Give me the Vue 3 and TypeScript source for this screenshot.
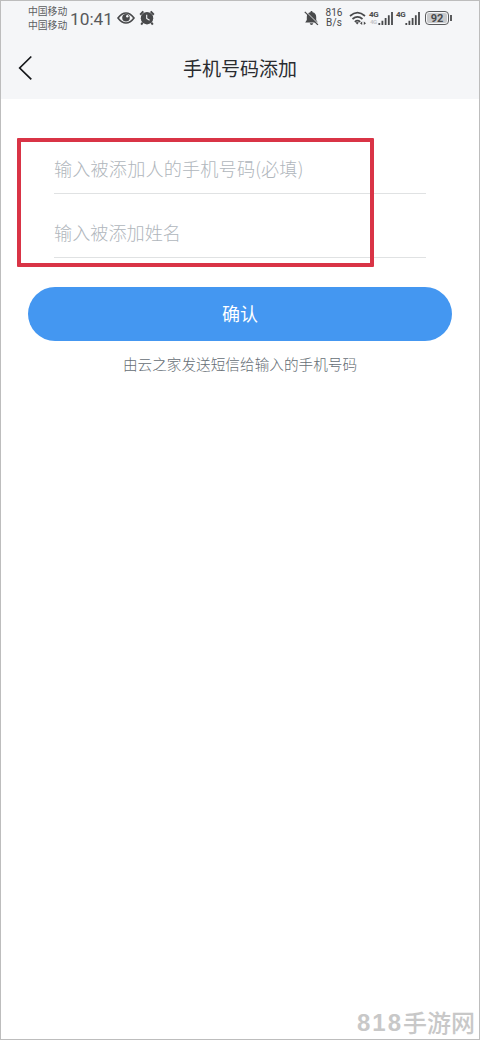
<script setup lang="ts">
import { ref } from 'vue'

interface Field {
  id: string
  hint: string
}

const fields: Field[] = [
  { id: 'phone', hint: '输入被添加人的手机号码(必填)' },
  { id: 'name', hint: '输入被添加姓名' },
]
const values = ref<Record<string, string>>({ phone: '', name: '' })
const carriers: string[] = ['中国移动', '中国移动']
</script>

<template>
  <main class="screen">
    <header class="top">
      <div class="status">
        <div class="carriers">
          <span v-for="(c, i) in carriers" :key="i">{{ c }}</span>
        </div>
        <span class="time">10:41</span>
        <svg class="eye" width="18" height="12" viewBox="0 0 18 12">
          <path d="M1 6Q4.7 1 9 1T17 6Q13.3 11 9 11T1 6Z" fill="none" stroke="#48494b" stroke-width="1.6" />
          <circle cx="9" cy="5.8" r="3.8" fill="#48494b" />
          <circle cx="10.3" cy="4.2" r="1.2" fill="#f5f6f8" />
        </svg>
        <svg class="alarm" width="16" height="16" viewBox="0 0 16 16">
          <path d="M1.2 4.7L4.3 1.4M14.8 4.7L11.7 1.4M3.7 12.5L2.2 14.6M12.3 12.5L13.8 14.6" fill="none" stroke="#48494b" stroke-width="2" />
          <circle cx="8" cy="8.2" r="6.2" fill="#48494b" />
          <path d="M7.7 4.8V8.5L10.6 10.2" fill="none" stroke="#f5f6f8" stroke-width="1.1" />
        </svg>
        <div class="right">
          <svg class="bell" width="15" height="16" viewBox="0 0 15 16">
            <path d="M7.5 1C8.3 1 8.6 1.6 8.6 2.3C11 2.8 12.2 4.7 12.2 7V10L13.8 12.6H1.2L2.8 10V7C2.8 4.7 4 2.8 6.4 2.3C6.4 1.6 6.7 1 7.5 1ZM5.7 13.2H9.3Q9 15 7.5 15T5.7 13.2Z" fill="#48494b" />
            <path d="M1.5 1.2L14.5 14" stroke="#f5f6f8" stroke-width="1" />
            <path d="M.8 1.9L13.9 14.9" stroke="#48494b" stroke-width="1.3" />
          </svg>
          <div class="speed"><span>816</span><span>B/s</span></div>
          <svg class="wifi" width="18" height="15" viewBox="0 0 18 15">
            <g fill="none" stroke="#48494b" stroke-width="1.7">
              <path d="M1 5Q8.5-1.7 16 5" />
              <path d="M3.5 8Q8.5 3.7 13.5 8" />
              <path d="M5.8 10.8Q8.5 8.6 11.2 10.8" />
            </g>
            <path d="M6.5 11.6Q8.2 10.5 9.9 11.6L8.2 13.6Z" fill="#48494b" />
            <path d="M11 12.3L13.2 10.5V14.1ZM17 12.3L14.8 10.5V14.1Z" fill="#48494b" />
          </svg>
          <div class="net"><span>4G</span><span class="faint">4G</span></div>
          <svg class="bars" width="16" height="15" viewBox="0 0 16 15">
            <path d="M.4 12H2.2V14H.4ZM3.5 9.7H5.3V14H3.5ZM6.7 7H8.5V14H6.7ZM9.9 4.3H11.7V14H9.9ZM13.1 1H14.9V14H13.1Z" fill="#48494b" />
          </svg>
          <div class="net second"><span>4G</span></div>
          <svg class="bars" width="16" height="15" viewBox="0 0 16 15">
            <path d="M.4 12H2.2V14H.4ZM3.5 9.7H5.3V14H3.5ZM6.7 7H8.5V14H6.7ZM9.9 4.3H11.7V14H9.9ZM13.1 1H14.9V14H13.1Z" fill="#48494b" />
          </svg>
          <div class="battery"><span>92</span></div>
          <i class="nub"></i>
        </div>
      </div>
      <div class="nav">
        <svg class="back" width="15" height="26" viewBox="0 0 15 26">
          <path d="M13.3 1.5L1.7 13L13.3 24.3" fill="none" stroke="#15171a" stroke-width="1.7" />
        </svg>
        <h1>手机号码添加</h1>
      </div>
    </header>

    <form class="form" @submit.prevent>
      <div class="fields">
        <label v-for="f in fields" :key="f.id" class="field">
          <input v-model="values[f.id]" :placeholder="f.hint" type="text" />
        </label>
      </div>
      <button type="submit">确认</button>
      <p>由云之家发送短信给输入的手机号码</p>
    </form>
    <div class="highlight"></div>
    <div class="mark"><b>818</b><span>手游网</span></div>
  </main>
</template>

<style>
body {
  margin: 0;
  background: #fff;
}
</style>

<style scoped>
.screen {
  position: relative;
  box-sizing: border-box;
  width: 480px;
  height: 1040px;
  border: 1px solid #bdbdbd;
  background: #fff;
  font-family: "Noto Sans CJK SC", sans-serif;
  overflow: hidden;
}
.top {
  height: 98px;
  background: #f5f6f8;
}
.status {
  display: flex;
  align-items: center;
  height: 34px;
  padding-left: 27px;
  color: #48494b;
}
.carriers {
  display: flex;
  flex-direction: column;
  width: 42px;
  font-size: 9.8px;
  line-height: 14px;
  white-space: nowrap;
  color: #5c5d5f;
}
.time {
  width: 43px;
  padding-top: 1px;
  font: 400 17.3px/20px Roboto, sans-serif;
  color: #58595b;
}
.eye { margin-left: 4px; }
.alarm { margin-left: 4px; }
.right {
  display: flex;
  align-items: center;
  margin-left: 149px;
}
.speed {
  display: flex;
  flex-direction: column;
  align-items: center;
  width: 20px;
  margin-left: 5px;
  font: 10px/10px Roboto, sans-serif;
  letter-spacing: 0.1px;
}
.wifi { margin-left: 5px; }
.net {
  display: flex;
  flex-direction: column;
  width: 9px;
  height: 14px;
  margin-left: 2px;
  font: 700 8px/7px "Liberation Sans Narrow", Roboto, sans-serif;
  letter-spacing: -0.4px;
}
.net.second { margin-left: 2px; }
.faint {
  padding-left: 1px;
  font-size: 6px;
  line-height: 7px;
  color: #c4c5c8;
}
.battery {
  box-sizing: border-box;
  width: 24px;
  height: 14px;
  margin-left: 4px;
  padding: 1px;
  border: 1.4px solid #5b5c5e;
  border-radius: 4px;
}
.battery span {
  display: block;
  height: 10px;
  border-radius: 2px;
  background: #c9cacc;
  font: 700 11px/11px Roboto, sans-serif;
  text-align: center;
}
.nub {
  width: 1.5px;
  height: 6px;
  margin-left: 1px;
  background: #5b5c5e;
}
.nav {
  display: grid;
  grid-template-columns: 60px 1fr 60px;
  align-items: center;
  height: 66px;
}
.back { margin-left: 17px; }
h1 {
  margin: 0;
  font-size: 19px;
  font-weight: 400;
  line-height: 28px;
  text-align: center;
  color: #2a2c30;
}
.form {
  padding: 45px 27px 0;
}
.fields {
  padding: 0 26px;
}
.field {
  display: block;
  box-sizing: border-box;
  height: 64px;
  padding-top: 10px;
}
.field input {
  display: block;
  box-sizing: border-box;
  width: 372px;
  height: 40px;
  padding: 0 0 11px;
  border: 0;
  border-bottom: 1px solid #e0e2e3;
  outline: 0;
  background: transparent;
  font: 300 18.15px/28px "Noto Sans CJK SC", sans-serif;
}
.field input::placeholder {
  color: #b0b6bc;
  opacity: 1;
}
.field:first-child input {
  letter-spacing: 0.15px;
}
button {
  display: block;
  width: 424px;
  height: 54px;
  margin-top: 15px;
  padding: 0 0 1px;
  border: 0;
  border-radius: 27px;
  background: #4497f1;
  color: #fff;
  font: 400 18px/53px "Noto Sans CJK SC", sans-serif;
}
p {
  margin: 11px 0 0;
  font-size: 14.65px;
  font-weight: 300;
  line-height: 24px;
  text-align: center;
  white-space: nowrap;
  color: #656d74;
}
.highlight {
  position: absolute;
  left: 16px;
  top: 137px;
  box-sizing: border-box;
  width: 357px;
  height: 129px;
  border: 4px solid #d93446;
  border-radius: 1px;
  pointer-events: none;
}
.mark {
  position: absolute;
  left: 356px;
  top: 1005px;
  display: flex;
  align-items: center;
  height: 34px;
  color: #c8c8c8;
}
.mark b {
  width: 46px;
  padding-bottom: 1px;
  font: 700 24px/30px "Liberation Sans", sans-serif;
  letter-spacing: 2px;
}
.mark span {
  padding-bottom: 3px;
  font-size: 24px;
  font-weight: 500;
  line-height: 30px;
}
</style>
